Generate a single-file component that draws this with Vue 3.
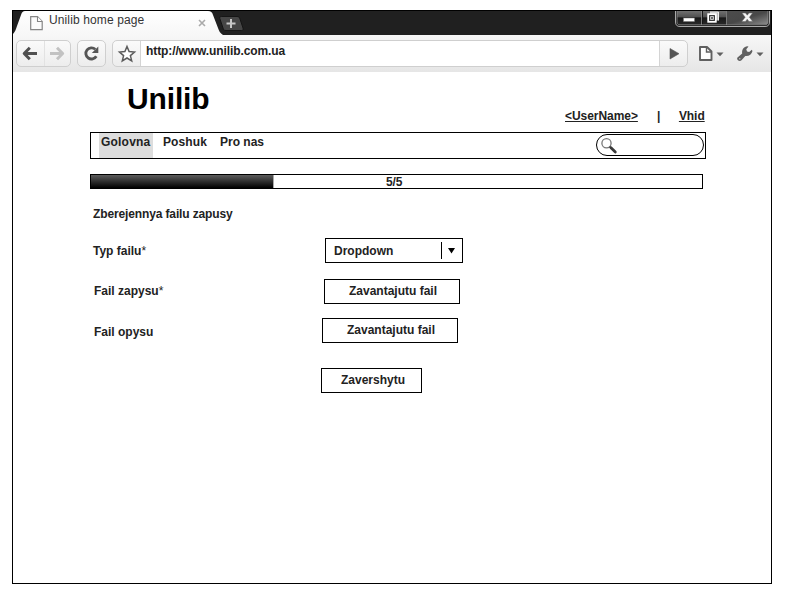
<script setup>
const navItems = [
  { label: 'Golovna', active: true, name: 'home' },
  { label: 'Poshuk', active: false, name: 'search-link' },
  { label: 'Pro nas', active: false, name: 'about' }
]
</script>

<template>
  <div class="window">
    <header class="chrome">
      <div class="tabstrip">
        <div class="tab">
          <svg class="tab-shape" width="210" height="24" viewBox="0 0 210 24">
            <defs>
              <linearGradient id="tabfill" x1="0" y1="0" x2="0" y2="1">
                <stop offset="0" stop-color="#ffffff" />
                <stop offset="1" stop-color="#f7f7f7" />
              </linearGradient>
            </defs>
            <path d="M0 24 V23 C2 21 3 18 4 15 L8 4 C9 1 10 0 12 0 H195 C198 0 199 1 200 4 L205 17 C206 20 207 22 210 24 Z" fill="url(#tabfill)" />
          </svg>
          <svg class="page-icon" width="13" height="15" viewBox="0 0 13 15">
            <path d="M.7.7H7.500L12.200 5.500V13.700H.7Z" fill="#fbfbfb" stroke="#858585" stroke-width="1.200" />
            <path d="M7.500.7V5.500H12.200" fill="#fff" stroke="#858585" stroke-width="1.100" />
          </svg>
          <span class="tab-title">Unilib home page</span>
          <svg class="tab-close" width="8" height="8" viewBox="0 0 8 8">
            <path d="M1 1L7 7M7 1L1 7" stroke="#aaa" stroke-width="1.600" />
          </svg>
        </div>
        <svg class="new-tab" width="26" height="15" viewBox="0 0 26 15">
          <path d="M2.500.5H18C20 .5 20.500 1.500 21 3L24 12C24.500 14 24 14.500 22.500 14.500H7C5 14.500 4.500 14 4 12L.8 2.500C.5 1 1 .5 2.500.5Z" fill="#464646" stroke="#151515" />
          <path d="M12 3V12M7.500 7.500H16.500" stroke="#c8c8c8" stroke-width="2" />
        </svg>
        <svg class="controls" width="96" height="17" viewBox="0 0 96 17">
          <defs>
            <linearGradient id="ctl" x1="0" y1="0" x2="0" y2="1">
              <stop offset="0" stop-color="#707070" />
              <stop offset=".45" stop-color="#505050" />
              <stop offset=".5" stop-color="#171717" />
              <stop offset="1" stop-color="#292929" />
            </linearGradient>
            <linearGradient id="ctlclose" x1="0" y1="0" x2="1" y2="1">
              <stop offset="0" stop-color="#4c4c4c" />
              <stop offset=".5" stop-color="#484848" />
              <stop offset="1" stop-color="#8c8c8c" />
            </linearGradient>
          </defs>
          <path d="M.5 0V11C.5 14 2 15.500 5 15.500H90C93 15.500 94.500 14 94.500 11V0" fill="#151515" stroke="#aaa" />
          <path d="M2 0H27V13.500H5C3 13.500 2 12.500 2 11Z" fill="url(#ctl)" />
          <path d="M28 0H51V13.500H28Z" fill="url(#ctl)" />
          <path d="M52 0H93V11C93 13 92 13.500 90 13.500H52Z" fill="url(#ctlclose)" />
          <path d="M2 0V11C2 13 3 13.800 5 13.800H90C92 13.800 93 13 93 11V0M26.500 0V14M51.500 0V14" fill="none" stroke="#909090" stroke-width=".8" />
          <rect x="8.500" y="7" width="11" height="3.500" fill="#fff" stroke="#777" stroke-width=".5" />
          <path d="M35 1H43.500V9.500H41V3.500H35Z" fill="#bbb" />
          <path d="M35 1H43.500V9.500" fill="none" stroke="#eee" />
          <rect x="33.200" y="3.200" width="7.600" height="7.600" fill="#262626" stroke="#fff" stroke-width="1.800" />
          <rect x="35.700" y="5.700" width="2.600" height="2.600" fill="#262626" stroke="#e8e8e8" />
          <path d="M67 2H70.500L72.300 4.200L74 2H77.500L74.400 6.200L77.700 10.500H74L72.200 8.200L70.500 10.500H66.800L70.200 6.200Z" fill="#f4f4f4" stroke="#666" stroke-width=".5" />
        </svg>
      </div>

      <div class="toolbar">
        <div class="tool-group history">
          <svg width="27" height="25" viewBox="0 0 27 25">
            <path d="M20 12.500H8M12.800 6.800L7.200 12.500L12.800 18.200" fill="none" stroke="#505050" stroke-width="3" stroke-linejoin="round" />
          </svg>
          <svg class="forward" width="26" height="25" viewBox="0 0 26 25">
            <path d="M5 12.500H17M12 6.800L17.700 12.500L12 18.200" fill="none" stroke="#c2c2c2" stroke-width="2.900" stroke-linejoin="round" />
          </svg>
        </div>
        <div class="tool-group reload">
          <svg width="27" height="25" viewBox="0 0 27 25">
            <path d="M17.300 8.300A5.600 5.600 0 1 0 18.300 15.200" fill="none" stroke="#555" stroke-width="2.800" />
            <path d="M20.300 5.500V12H13.800Z" fill="#555" />
          </svg>
        </div>
        <div class="tool-group address">
          <svg class="star" width="27" height="25" viewBox="0 0 27 25">
            <path d="M14 5.500L16.100 10.600L21.500 11L17.400 14.600L18.700 19.900L14 17L9.300 19.900L10.600 14.600L6.500 11L11.900 10.600Z" fill="#fff" stroke="#5c5c5c" stroke-width="1.500" />
          </svg>
          <span class="url">http://www.unilib.com.ua</span>
          <svg class="go" width="27" height="25" viewBox="0 0 27 25">
            <path d="M10 7.500V18L19 12.700Z" fill="#555" stroke="#555" stroke-width=".6" />
          </svg>
        </div>
        <svg class="page-menu" width="25" height="16" viewBox="0 0 25 16">
          <path d="M1 1H8L12.500 5.500V14H1Z" fill="#fff" stroke="#606060" stroke-width="1.900" stroke-linejoin="round" />
          <path d="M7.500 1V6H12.500" fill="none" stroke="#606060" stroke-width="1.400" />
          <path d="M17.500 6.500H24.500L21 10.200Z" fill="#606060" />
        </svg>
        <svg class="wrench" width="27" height="16" viewBox="0 0 27 16">
          <path d="M.5 11.500L5.200 7.400C4.500 4 6.500.8 10 .3L11.500 .6L9.300 3.200L10 5.400L12.200 6L14.800 3.800L15.500 5C14.800 8.500 11.500 10.500 8.300 9.900L4.500 14.300C2.500 16.200-1 13.700.5 11.500Z" fill="#606060" />
          <circle cx="2.800" cy="12.800" r=".7" fill="#ccc" />
          <path d="M19.500 6.500H26.500L23 10.200Z" fill="#606060" />
        </svg>
      </div>
    </header>

    <main class="page">
      <div class="masthead">
        <h1>Unilib</h1>
        <div class="account">
          <a class="user">&lt;UserName&gt;</a>
          <span class="bar">|</span>
          <a class="login">Vhid</a>
        </div>
      </div>

      <nav class="nav">
        <a v-for="item in navItems" :key="item.label" :class="[item.name, { active: item.active }]">{{ item.label }}</a>
        <div class="search">
          <svg width="17" height="17" viewBox="0 0 17 17">
            <circle cx="5.500" cy="5.300" r="4.600" fill="#fff" stroke="#777" stroke-width="1.300" />
            <path d="M8.500 8.500L10.500 10.500" stroke="#555" stroke-width="1.800" />
            <path d="M10 9.800L14.300 14" stroke="#3a3a3a" stroke-width="2.800" stroke-linecap="round" />
          </svg>
        </div>
      </nav>

      <div class="progress">
        <div class="fill"></div>
        <span class="count">5/5</span>
      </div>

      <h2>Zberejennya failu zapusy</h2>

      <div class="form">
        <div class="row type">
          <label>Typ failu<i>*</i></label>
          <div class="dropdown">
            <span>Dropdown</span>
            <svg width="21" height="17" viewBox="0 0 21 17">
              <path d="M.5 0V17" stroke="#000" />
              <path d="M7 6H14L10.500 11.500Z" fill="#000" />
            </svg>
          </div>
        </div>
        <div class="row record">
          <label>Fail zapysu<i>*</i></label>
          <button>Zavantajutu fail</button>
        </div>
        <div class="row description">
          <label>Fail opysu</label>
          <button>Zavantajutu fail</button>
        </div>
        <button class="finish">Zavershytu</button>
      </div>
    </main>
  </div>
</template>

<style>
body {
  background: #fff;
}
</style>

<style scoped>
.window {
  box-sizing: border-box;
  width: 760px;
  height: 574px;
  margin: 10px 0 0 12px;
  border: 1px solid #000;
  background: #fff;
  overflow: hidden;
  font: bold 12px/14px "Liberation Sans", Arial, sans-serif;
  color: #222;
}
svg {
  display: block;
  flex: none;
}
.tabstrip {
  display: flex;
  height: 24px;
  background: #202020;
}
.tab {
  position: relative;
  display: flex;
  width: 206px;
  height: 24px;
}
.tab-shape {
  position: absolute;
  left: 0;
  top: 0;
}
.page-icon {
  position: relative;
  margin: 5px 0 0 17px;
}
.tab-title {
  position: relative;
  width: 149px;
  margin: 2px 0 0 6px;
  font-weight: normal;
  letter-spacing: 0.12px;
  color: #333;
}
.tab-close {
  position: relative;
  margin-top: 8px;
}
.new-tab {
  margin-top: 5px;
}
.controls {
  margin-left: auto;
}
.toolbar {
  display: flex;
  box-sizing: border-box;
  height: 37px;
  padding: 5px 0 0 3px;
  background: linear-gradient(#f7f7f7, #e6e6e6);
}
.tool-group {
  display: flex;
  box-sizing: border-box;
  height: 27px;
  border: 1px solid #cfcfcf;
  border-radius: 5px;
  background: linear-gradient(#fafafa, #ededed);
}
.history {
  width: 55px;
}
.forward {
  border-left: 1px solid #e2e2e2;
}
.reload {
  width: 29px;
  margin-left: 6px;
}
.address {
  width: 576px;
  margin-left: 6px;
}
.url {
  flex: 1;
  height: 25px;
  box-sizing: border-box;
  padding: 3px 0 0 5px;
  border: solid #d4d4d4;
  border-width: 0 1px;
  background: #fff;
  letter-spacing: -0.1px;
}
.page-menu {
  margin: 6px 0 0 11px;
}
.wrench {
  margin: 6px 0 0 13px;
}
.page {
  padding-left: 77px;
}
.masthead {
  display: flex;
  height: 60px;
}
h1 {
  box-sizing: border-box;
  width: 437px;
  margin: 10px 0 0 36px;
  padding-left: 1px;
  font-size: 30px;
  line-height: 34px;
  letter-spacing: -0.15px;
  color: #000;
}
.account {
  display: flex;
  margin: 37px 0 0 2px;
  letter-spacing: -0.05px;
}
.account a {
  text-decoration: underline;
}
.bar {
  width: 3px;
  margin: 0 19px 0 19px;
}
.nav {
  display: flex;
  box-sizing: border-box;
  width: 616px;
  height: 27px;
  border: 1px solid #000;
  padding-left: 8px;
}
.nav a {
  padding-top: 2px;
  letter-spacing: 0.1px;
}
.nav .home {
  box-sizing: border-box;
  width: 54px;
  padding-left: 2px;
  letter-spacing: 0.2px;
}
.nav .active {
  background: #ddd;
}
.nav .search-link {
  width: 57px;
  padding-left: 10px;
}
.nav .about {
  letter-spacing: 0;
}
.search {
  box-sizing: border-box;
  width: 108px;
  height: 22px;
  margin: 1px 1px 0 auto;
  padding: 3px 0 0 4px;
  border: 1px solid #000;
  border-radius: 11px;
}
.progress {
  display: flex;
  box-sizing: border-box;
  width: 613px;
  height: 15px;
  margin-top: 15px;
  border: 1px solid #000;
}
.fill {
  width: 182px;
  border-right: 1px solid #aaa;
  background: linear-gradient(#5c5c5c, #000);
}
.count {
  margin-left: 112px;
  line-height: 15px;
  letter-spacing: -0.1px;
}
h2 {
  margin: 18px 0 0 3px;
  font-size: 12px;
  line-height: 14px;
  letter-spacing: -0.13px;
}
.form {
  padding: 17px 0 0 3px;
}
.row {
  display: flex;
  height: 25px;
}
.row label {
  width: 232px;
  padding-top: 6px;
}
i {
  font-style: normal;
  font-weight: normal;
}
.dropdown {
  display: flex;
  box-sizing: border-box;
  width: 138px;
  height: 25px;
  border: 1px solid #000;
}
.dropdown span {
  width: 107px;
  padding: 5px 0 0 8px;
}
.dropdown svg {
  margin-top: 3px;
}
button {
  display: block;
  box-sizing: border-box;
  width: 136px;
  height: 25px;
  padding: 0 0 2px 2px;
  border: 1px solid #000;
  background: #fff;
  font: inherit;
  color: inherit;
}
.record {
  margin-top: 16px;
}
.record label {
  box-sizing: border-box;
  width: 231px;
  padding: 5px 0 0 1px;
}
.description {
  margin-top: 14px;
}
.description label {
  box-sizing: border-box;
  width: 229px;
  padding: 7px 0 0 1px;
}
.finish {
  width: 101px;
  margin: 25px 0 0 228px;
  padding: 0 0 2px 3px;
}
</style>
